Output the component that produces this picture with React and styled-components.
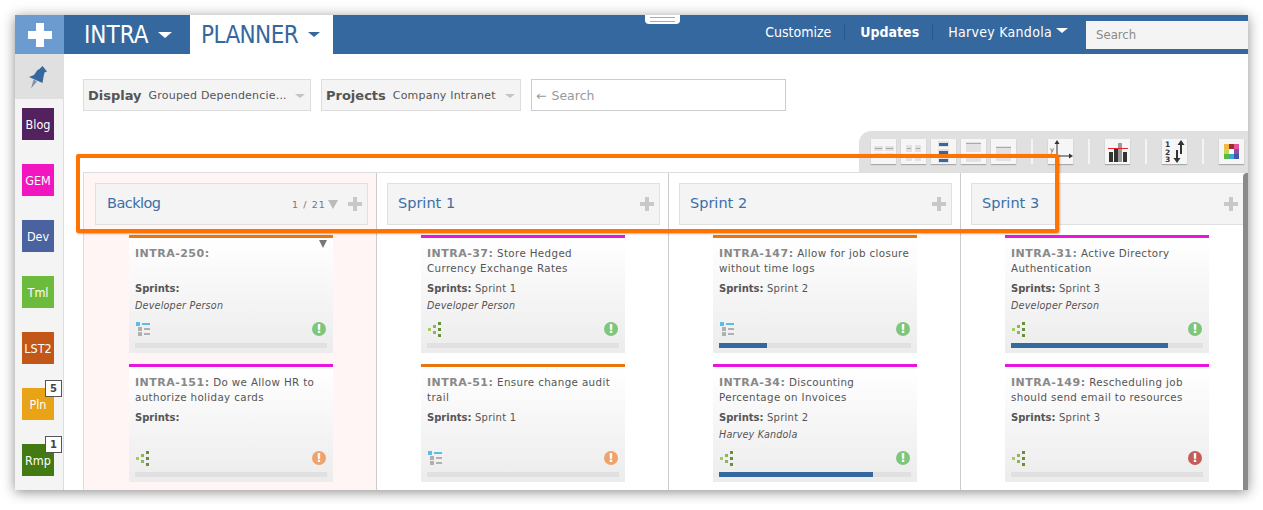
import React from "react";
import styled, { createGlobalStyle } from "styled-components";

const Global = createGlobalStyle`
  html, body { margin: 0; padding: 0; background: #fff; overflow: hidden; }
  body { font-family: "DejaVu Sans", Verdana, sans-serif; }
`;

const Page = styled.div`
  padding: 15px;
`;

const Window = styled.div`
  position: relative;
  width: 1233px;
  height: 475px;
  overflow: hidden;
  background: #fff;
  box-shadow: 0 2px 12px rgba(0, 0, 0, 0.45);
`;

const Header = styled.header`
  display: flex;
  align-items: stretch;
  height: 39px;
  background: #35689f;
`;

const AddBox = styled.div`
  width: 49px;
  display: flex;
  align-items: center;
  justify-content: center;
  background: #6c9bcf;
`;

const Tab = styled.div`
  display: flex;
  align-items: center;
  font-family: "DejaVu Sans Condensed", "DejaVu Sans", sans-serif;
  font-size: 24px;
  letter-spacing: ${p => (p.$active ? "-0.6px" : "0")};
  width: ${p => p.$w}px;
  padding-left: ${p => p.$pad}px;
  box-sizing: border-box;
  color: ${p => (p.$active ? "#35689f" : "#fff")};
  background: ${p => (p.$active ? "#fff" : "transparent")};
`;

const Caret = styled.span`
  display: inline-block;
  margin-left: ${p => p.$ml || 9}px;
  margin-top: ${p => p.$mt || 0}px;
  border-left: ${p => p.$s || 7}px solid transparent;
  border-right: ${p => p.$s || 7}px solid transparent;
  border-top: ${p => (p.$s ? p.$s - 1 : 6)}px solid ${p => p.$color || "#fff"};
`;

const Nav = styled.nav`
  margin-left: auto;
  display: flex;
  align-items: center;
  height: 28px;
  margin-top: 3px;
  font-family: "DejaVu Sans Condensed", "DejaVu Sans", sans-serif;
  font-size: 14px;
  color: #fff;
`;

const NavItem = styled.span`
  display: flex;
  align-items: center;
  height: 16px;
  padding: 0 ${p => p.$pr || 13}px 0 15px;
  font-weight: ${p => (p.$bold ? 700 : 400)};
  letter-spacing: ${p => p.$track || 0}px;
  border-right: ${p => (p.$sep ? "1px solid #2b5685" : "none")};
`;

const TopSearch = styled.div`
  width: 170px;
  height: 28px;
  margin-top: 5px;
  flex: none;
  margin-right: -8px;
  padding: 0 10px;
  box-sizing: border-box;
  display: flex;
  align-items: center;
  background: #f4f4f4;
  color: #8a8a8a;
  font-size: 13px;
`;

const Handle = styled.div`
  position: absolute;
  left: 630px;
  top: 0;
  width: 35px;
  height: 9px;
  background: #fff;
  border-radius: 0 0 4px 4px;
  &::before {
    content: "";
    position: absolute;
    left: 5px;
    right: 5px;
    top: 2px;
    height: 3px;
    border-top: 1px solid #aaa;
    border-bottom: 1px solid #aaa;
  }
`;

const Body = styled.div`
  display: flex;
  height: 436px;
`;

const Sidebar = styled.aside`
  width: 49px;
  flex: none;
  box-sizing: border-box;
  background: #f4f4f4;
  border-right: 1px solid #ddd;
`;

const PinBox = styled.div`
  height: 45px;
  margin-right: -1px;
  display: flex;
  align-items: center;
  justify-content: center;
  background: #e0e0e0;
  svg {
    margin-left: -3px;
  }
`;

const Tiles = styled.div`
  display: flex;
  flex-direction: column;
  gap: 24px;
  padding: 9px 0 0 7px;
`;

const Tile = styled.div`
  position: relative;
  width: 32px;
  height: 32px;
  display: flex;
  align-items: center;
  justify-content: center;
  color: #fff;
  background: ${p => p.$color};
  font-family: "DejaVu Sans Condensed", "DejaVu Sans", sans-serif;
  font-size: 12.5px;
`;

const Badge = styled.span`
  position: absolute;
  left: 23px;
  top: -8px;
  width: 17px;
  height: 17px;
  box-sizing: border-box;
  display: flex;
  align-items: center;
  justify-content: center;
  background: #fff;
  color: #444;
  border: 1px solid #555;
  font-family: "DejaVu Sans", sans-serif;
  font-weight: 700;
  font-size: 10px;
`;

const Main = styled.main`
  flex: 1;
  min-width: 0;
  display: flex;
  flex-direction: column;
  padding-top: 25px;
  overflow: hidden;
`;

const Filters = styled.div`
  display: flex;
  gap: 10px;
  height: 32px;
  padding-left: 19px;
`;

const Select = styled.div`
  width: ${p => p.$w}px;
  box-sizing: border-box;
  display: flex;
  align-items: center;
  padding-left: 4px;
  background: #f4f4f4;
  border: 1px solid #ddd;
  color: #555;
  font-size: 11px;
  letter-spacing: 0.2px;
  white-space: nowrap;
`;

const SelectLabel = styled.b`
  font-size: 13px;
  margin-right: 7px;
  letter-spacing: 0;
  color: #555;
`;

const FilterSearch = styled.div`
  width: 255px;
  box-sizing: border-box;
  display: flex;
  align-items: center;
  gap: 5px;
  padding-left: 4px;
  border: 1px solid #ccc;
  color: #999;
  font-size: 12.5px;
`;

const Toolbar = styled.div`
  align-self: flex-end;
  width: 389px;
  height: 41px;
  margin-top: 20px;
  box-sizing: border-box;
  display: flex;
  align-items: flex-start;
  padding: 8px 0 0 12px;
  background: #e0e0e0;
  border-top-left-radius: 12px;
  overflow: hidden;
  flex: none;
`;

const ToolGroup = styled.div`
  display: flex;
  gap: 5px;
`;

const ToolButton = styled.div`
  width: 25px;
  height: 25px;
  flex: none;
  background: #f6f6f6;
  box-shadow: 0 1px 1px #aaa;
  svg {
    display: block;
  }
`;

const ToolSep = styled.div`
  width: 2px;
  height: 25px;
  margin: 0 15px;
  flex: none;
  background: #f4f4f4;
`;

const Board = styled.div`
  display: flex;
  flex: 1;
  border-top: 1px solid #ddd;
  margin-left: 19px;
  min-height: 0;
`;

const Column = styled.section`
  flex: none;
  width: ${p => (p.$backlog ? 293 : 292)}px;
  box-sizing: border-box;
  padding: 10px 8px 0 ${p => (p.$backlog ? 11 : 10)}px;
  border-left: 1px solid ${p => (p.$backlog ? "#ddd" : "#ccc")};
  background: ${p => (p.$backlog ? "#fff5f5" : "#fff")};
`;

const ColHead = styled.div`
  height: 42px;
  width: 273px;
  box-sizing: border-box;
  display: flex;
  align-items: center;
  padding: 0 5px 0 ${p => (p.$backlog ? 11 : 10)}px;
  background: #f4f4f4;
  border: 1px solid #e0e0e0;
  color: #3a6fa8;
  font-size: 14.5px;
`;

const ColName = styled.span`
  margin-top: -2px;
  letter-spacing: ${p => (p.$backlog ? "-0.55px" : "0")};
`;

const Count = styled.span`
  margin-left: auto;
  font-size: 9.5px;
  letter-spacing: 1.1px;
  color: #777;
`;

const CountArrow = styled.span`
  width: 0;
  height: 0;
  margin: 0 10px 0 2px;
  border-left: 5px solid transparent;
  border-right: 5px solid transparent;
  border-top: 9px solid #bbb;
`;

const HeadPlus = styled.span`
  margin-left: ${p => (p.$auto ? "auto" : "0")};
  display: flex;
`;

const Card = styled.article`
  position: relative;
  width: 204px;
  height: 118px;
  margin: 0 0 11px 34px;
  box-sizing: border-box;
  display: flex;
  flex-direction: column;
  padding: 8px 6px 5px;
  border-top: 3px solid ${p => p.$color};
  background: linear-gradient(#fff, #ececec);
  color: #555;
  font-size: 10px;
  &:first-of-type {
    margin-top: 10px;
  }
`;

const Title = styled.div`
  min-height: 30px;
  line-height: 15px;
  font-size: 10.3px;
  letter-spacing: 0.37px;
`;

const Key = styled.b`
  color: #888;
  font-size: 11px;
  letter-spacing: 0.48px;
`;

const Meta = styled.div`
  margin-top: 4px;
  line-height: 17px;
  font-size: 10px;
  letter-spacing: 0.25px;
  b {
    color: #555;
    letter-spacing: 0;
  }
`;

const Person = styled.div`
  line-height: 17px;
  font-style: italic;
  font-size: 9.6px;
  letter-spacing: 0.2px;
`;

const CardFoot = styled.div`
  margin-top: auto;
  display: flex;
  align-items: center;
  justify-content: space-between;
  height: 14px;
  padding: 0 1px;
`;

const Status = styled.span`
  width: 14px;
  height: 14px;
  border-radius: 50%;
  display: flex;
  align-items: center;
  justify-content: center;
  background: ${p => p.$color};
  color: #fff;
  font-size: 12px;
  font-weight: 700;
`;

const Progress = styled.div`
  height: 5px;
  margin-top: 7px;
  background: #e0e0e0;
`;

const ProgressFill = styled.div`
  height: 100%;
  background: #35689f;
`;

const CardMenu = styled.span`
  position: absolute;
  right: 6px;
  top: 2px;
  border-left: 4px solid transparent;
  border-right: 4px solid transparent;
  border-top: 8px solid #777;
`;

const Highlight = styled.div`
  position: absolute;
  left: 61px;
  top: 139px;
  width: 983px;
  height: 79px;
  box-sizing: border-box;
  border: 4px solid #ff7400;
  border-radius: 2px;
  box-shadow: 1px 1px 2px rgba(0, 0, 0, 0.3);
`;

const Scrollbar = styled.div`
  position: absolute;
  right: 0;
  top: 158px;
  bottom: 0;
  width: 5px;
  background: #8a8a8a;
  border-top-left-radius: 4px;
`;

const Plus = ({ size, bar, color }) => {
  const at = (size - bar) / 2;
  return (
    <svg width={size} height={size} viewBox={`0 0 ${size} ${size}`}>
      <rect x={at} width={bar} height={size} fill={color} />
      <rect y={at} width={size} height={bar} fill={color} />
    </svg>
  );
};

const PinIcon = () => (
  <svg width="20" height="24" viewBox="0 0 20 24">
    <path d="M5.5 14.5L3 23.5L9 16.5Z" fill="#7f95ad" />
    <path
      d="M14.5 1L19 6.5L16.5 7.5L15.5 12L14.5 18L1 12L6 10L9.5 5L11.5 4Z"
      fill="#35689f"
    />
  </svg>
);

const DepIcon = () => (
  <svg width="13" height="15" viewBox="0 0 13 15">
    <rect x="0" y="6" width="3" height="3" fill="#a4cc5e" />
    <rect x="5" y="3" width="3" height="3" fill="#8eb35c" />
    <rect x="5" y="9" width="3" height="3" fill="#8eb35c" />
    <rect x="10" y="0" width="3" height="3" fill="#66913a" />
    <rect x="10" y="6" width="3" height="3" fill="#66913a" />
    <rect x="10" y="12" width="3" height="3" fill="#66913a" />
  </svg>
);

const ListIcon = () => (
  <svg width="14" height="14" viewBox="0 0 14 14">
    <rect x="0" y="0" width="4" height="4" fill="#5bbde8" />
    <rect x="6" y="1" width="8" height="2" fill="#5bbde8" />
    <rect x="2" y="5" width="4" height="4" fill="#b0b0b0" />
    <rect x="8" y="6" width="6" height="2" fill="#b0b0b0" />
    <rect x="2" y="10" width="4" height="4" fill="#b0b0b0" />
    <rect x="8" y="11" width="6" height="2" fill="#b0b0b0" />
  </svg>
);

const ToolSvg = ({ children }) => (
  <svg width="25" height="25" viewBox="0 0 25 25">
    {children}
  </svg>
);

const LayoutFour = () => (
  <ToolSvg>
    <rect x="3" y="7" width="9" height="5" fill="#e2e2e2" />
    <rect x="14" y="7" width="9" height="5" fill="#e2e2e2" />
    <rect x="4" y="9" width="7" height="1" fill="#aaa" />
    <rect x="15" y="9" width="7" height="1" fill="#aaa" />
    <rect x="3" y="14" width="9" height="5" fill="#e2e2e2" />
    <rect x="14" y="14" width="9" height="5" fill="#e2e2e2" />
    <rect x="4" y="16" width="7" height="1" fill="#aaa" />
    <rect x="15" y="16" width="7" height="1" fill="#aaa" />
  </ToolSvg>
);

const LayoutSmall = () => (
  <ToolSvg>
    <rect x="5" y="6" width="6" height="7" fill="#e2e2e2" />
    <rect x="14" y="6" width="6" height="7" fill="#e2e2e2" />
    <rect x="6" y="9" width="4" height="1" fill="#aaa" />
    <rect x="15" y="9" width="4" height="1" fill="#aaa" />
    <rect x="5" y="16" width="6" height="6" fill="#e2e2e2" />
    <rect x="14" y="16" width="6" height="6" fill="#e2e2e2" />
  </ToolSvg>
);

const LayoutBlue = () => (
  <ToolSvg>
    <rect x="7" y="2" width="11" height="6" fill="#e2e2e2" />
    <rect x="8" y="4" width="9" height="3" fill="#35689f" />
    <rect x="7" y="10" width="11" height="6" fill="#e2e2e2" />
    <rect x="8" y="12" width="9" height="3" fill="#35689f" />
    <rect x="7" y="18" width="11" height="6" fill="#e2e2e2" />
    <rect x="8" y="20" width="9" height="3" fill="#35689f" />
  </ToolSvg>
);

const LayoutRows = () => (
  <ToolSvg>
    <rect x="5" y="3" width="15" height="10" fill="#e2e2e2" />
    <rect x="5" y="4" width="15" height="1" fill="#aaa" />
    <rect x="5" y="15" width="15" height="8" fill="#e2e2e2" />
    <rect x="5" y="16" width="15" height="1" fill="#aaa" />
  </ToolSvg>
);

const LayoutOne = () => (
  <ToolSvg>
    <rect x="5" y="7" width="15" height="15" fill="#e2e2e2" />
    <rect x="5" y="8" width="15" height="1" fill="#aaa" />
  </ToolSvg>
);

const AxesIcon = () => (
  <ToolSvg>
    <path d="M9 17V4M9 17H23" stroke="#333" strokeWidth="1" fill="none" />
    <path d="M9 1l2.5 4h-5zM25 17l-4-2.5v5z" fill="#333" />
    <text x="2" y="13" fontSize="7" fill="#555" fontFamily="DejaVu Sans">y</text>
  </ToolSvg>
);

const BarsIcon = () => (
  <ToolSvg>
    <rect x="4" y="13" width="4" height="10" fill="#333" />
    <rect x="9" y="9" width="4" height="14" fill="#333" />
    <rect x="13" y="4" width="4" height="19" fill="#999" />
    <rect x="18" y="13" width="4" height="10" fill="#333" />
    <rect x="3" y="9" width="20" height="1" fill="#e8202a" />
  </ToolSvg>
);

const SortIcon = () => (
  <ToolSvg>
    <g fontSize="7.5" fontWeight="700" fill="#333" fontFamily="DejaVu Sans">
      <text x="3" y="8">1</text>
      <text x="3" y="16">2</text>
      <text x="3" y="23">3</text>
    </g>
    <path d="M19 5V15M15 11V21" stroke="#333" strokeWidth="2" fill="none" />
    <path d="M19 1l3.5 5h-7zM15 24l-3.5-5h7z" fill="#333" />
  </ToolSvg>
);

const PaletteIcon = () => (
  <ToolSvg>
    <rect x="5" y="5" width="5" height="5" fill="#f2b84b" />
    <rect x="10" y="5" width="5" height="5" fill="#a52a2a" />
    <rect x="15" y="5" width="5" height="5" fill="#e0559c" />
    <rect x="5" y="10" width="5" height="5" fill="#c4d94a" />
    <rect x="10" y="10" width="5" height="5" fill="#fff" />
    <rect x="15" y="10" width="5" height="5" fill="#8c4fa6" />
    <rect x="5" y="15" width="5" height="5" fill="#5cb84a" />
    <rect x="10" y="15" width="5" height="5" fill="#35a7dc" />
    <rect x="15" y="15" width="5" height="5" fill="#4456a8" />
  </ToolSvg>
);

const GREEN = "#7dc67d";
const AMBER = "#eea36f";
const RED = "#c45c5c";
const ORANGE = "#e8770f";
const MAGENTA = "#e815dc";

const tiles = [
  { name: "Blog", color: "#54215f" },
  { name: "GEM", color: "#f215c0" },
  { name: "Dev", color: "#4a62a0" },
  { name: "Tml", color: "#6cbb3c" },
  { name: "LST2", color: "#c25717" },
  { name: "Pln", color: "#e8a317", badge: 5 },
  { name: "Rmp", color: "#437a14", badge: 1 },
];

const columns = [
  {
    name: "Backlog",
    backlog: true,
    cards: [
      { id: "INTRA-250", color: ORANGE, sprint: "", person: "Developer Person", icon: "list", status: GREEN, menu: true },
      { id: "INTRA-151", text: "Do we Allow HR to authorize holiday cards", color: MAGENTA, sprint: "", icon: "dep", status: AMBER },
    ],
  },
  {
    name: "Sprint 1",
    cards: [
      { id: "INTRA-37", text: "Store Hedged Currency Exchange Rates", color: MAGENTA, sprint: "Sprint 1", person: "Developer Person", icon: "dep", status: GREEN },
      { id: "INTRA-51", text: "Ensure change audit trail", color: ORANGE, sprint: "Sprint 1", icon: "list", status: AMBER },
    ],
  },
  {
    name: "Sprint 2",
    cards: [
      { id: "INTRA-147", text: "Allow for job closure without time logs", color: ORANGE, sprint: "Sprint 2", icon: "list", status: GREEN, done: 25 },
      { id: "INTRA-34", text: "Discounting Percentage on Invoices", color: MAGENTA, sprint: "Sprint 2", person: "Harvey Kandola", icon: "dep", status: GREEN, done: 80 },
    ],
  },
  {
    name: "Sprint 3",
    cards: [
      { id: "INTRA-31", text: "Active Directory Authentication", color: MAGENTA, sprint: "Sprint 3", person: "Developer Person", icon: "dep", status: GREEN, done: 82 },
      { id: "INTRA-149", text: "Rescheduling job should send email to resources", color: MAGENTA, sprint: "Sprint 3", icon: "dep", status: RED },
    ],
  },
];

function App() {
  return (
    <Page>
      <Global />
      <Window>
        <Header>
          <AddBox>
            <Plus size={24} bar={8} color="#fff" />
          </AddBox>
          <Tab $w={126} $pad={20}>
            INTRA
            <Caret />
          </Tab>
          <Tab $w={143} $pad={11} $active>
            PLANNER
            <Caret $color="#35689f" $s={6} $ml={10} />
          </Tab>
          <Nav>
            <NavItem $sep>Customize</NavItem>
            <NavItem $sep $bold>Updates</NavItem>
            <NavItem $pr={18} $track={0.3}>
              Harvey Kandola
              <Caret $ml={4} $s={6} $mt={-3} />
            </NavItem>
            <TopSearch>Search</TopSearch>
          </Nav>
        </Header>
        <Handle />
        <Body>
          <Sidebar>
            <PinBox>
              <PinIcon />
            </PinBox>
            <Tiles>
              {tiles.map(tile => (
                <Tile key={tile.name} $color={tile.color}>
                  {tile.name}
                  {tile.badge && <Badge>{tile.badge}</Badge>}
                </Tile>
              ))}
            </Tiles>
          </Sidebar>
          <Main>
            <Filters>
              <Select $w={228}>
                <SelectLabel>Display</SelectLabel>
                Grouped Dependencie...
                <Caret $color="#c4c4c4" $s={5} $ml={8} $mt={2} />
              </Select>
              <Select $w={200}>
                <SelectLabel>Projects</SelectLabel>
                Company Intranet
                <Caret $color="#c4c4c4" $s={5} $ml={9} $mt={2} />
              </Select>
              <FilterSearch>
                <span>←</span>
                Search
              </FilterSearch>
            </Filters>
            <Toolbar>
              <ToolGroup>
                <ToolButton><LayoutFour /></ToolButton>
                <ToolButton><LayoutSmall /></ToolButton>
                <ToolButton><LayoutBlue /></ToolButton>
                <ToolButton><LayoutRows /></ToolButton>
                <ToolButton><LayoutOne /></ToolButton>
              </ToolGroup>
              <ToolSep />
              <ToolButton><AxesIcon /></ToolButton>
              <ToolSep />
              <ToolButton><BarsIcon /></ToolButton>
              <ToolSep />
              <ToolButton><SortIcon /></ToolButton>
              <ToolSep />
              <ToolButton><PaletteIcon /></ToolButton>
            </Toolbar>
            <Board>
              {columns.map(col => (
                <Column key={col.name} $backlog={col.backlog}>
                  <ColHead $backlog={col.backlog}>
                    <ColName $backlog={col.backlog}>{col.name}</ColName>
                    {col.backlog && (
                      <>
                        <Count>1 / 21</Count>
                        <CountArrow />
                      </>
                    )}
                    <HeadPlus $auto={!col.backlog}>
                      <Plus size={14} bar={4} color="#c8c8c8" />
                    </HeadPlus>
                  </ColHead>
                  {col.cards.map(card => (
                    <Card key={card.id} $color={card.color}>
                      {card.menu && <CardMenu />}
                      <Title>
                        <Key>{card.id}:</Key> {card.text}
                      </Title>
                      <Meta>
                        <b>Sprints:</b> {card.sprint}
                      </Meta>
                      {card.person && <Person>{card.person}</Person>}
                      <CardFoot>
                        {card.icon === "dep" ? <DepIcon /> : <ListIcon />}
                        <Status $color={card.status}>!</Status>
                      </CardFoot>
                      <Progress>
                        {card.done && <ProgressFill style={{ width: `${card.done}%` }} />}
                      </Progress>
                    </Card>
                  ))}
                </Column>
              ))}
            </Board>
          </Main>
        </Body>
        <Highlight />
        <Scrollbar />
      </Window>
    </Page>
  );
}

export default App;
